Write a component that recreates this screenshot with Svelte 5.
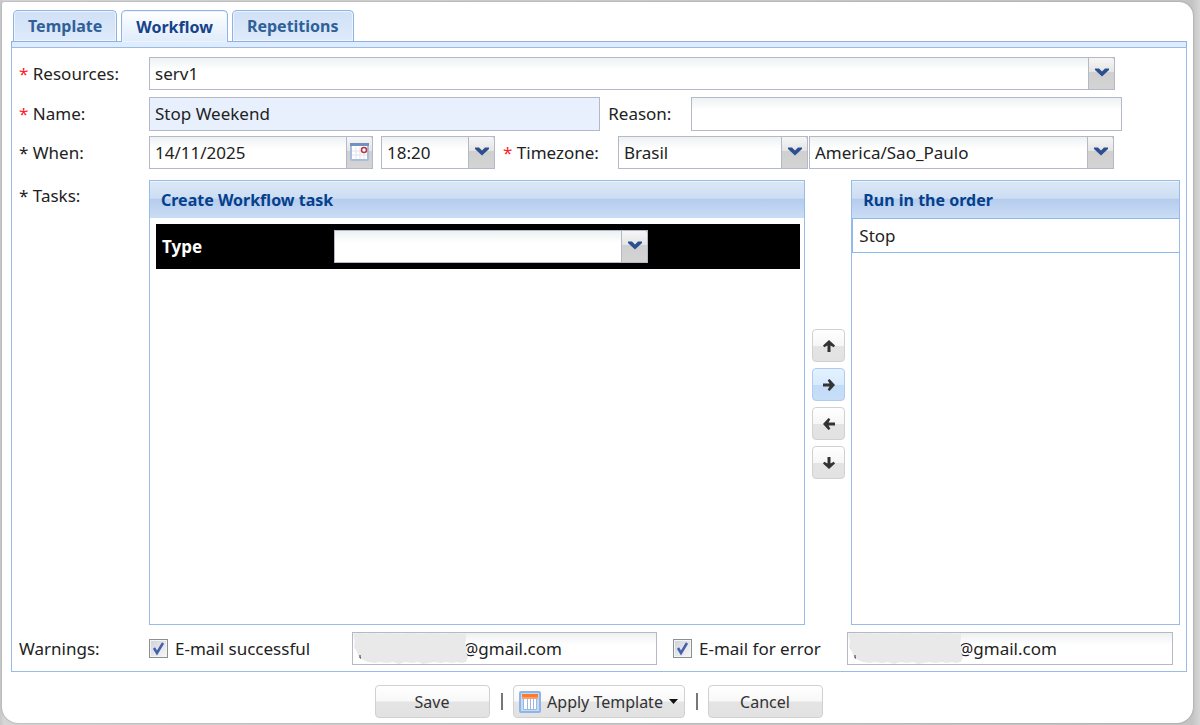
<script lang="ts">
  const tabs = ['Template', 'Workflow', 'Repetitions'];
  const arrows = [
    { name: 'Move up', angle: 0 },
    { name: 'Add task', angle: 90 },
    { name: 'Remove task', angle: 270 },
    { name: 'Move down', angle: 180 }
  ];

  let activeTab = $state('Workflow');
  let activeArrow = $state('Add task');
  let tasks = $state(['Stop']);
  let form = $state({
    resource: 'serv1',
    name: 'Stop Weekend',
    reason: '',
    date: '14/11/2025',
    time: '18:20',
    country: 'Brasil',
    timezone: 'America/Sao_Paulo',
    type: '',
    onSuccess: true,
    onError: true,
    successMail: '@gmail.com',
    errorMail: '@gmail.com'
  });
</script>

{#snippet trigger()}
  <span class="trigger">
    <svg width="14" height="9" viewBox="0 0 14 9" aria-hidden="true">
      <path d="M0 .5h4L7 3.500 10 .5h4V2L7 8.500 0 2z" fill="#2c4f90" />
    </svg>
  </span>
{/snippet}

{#snippet smudge()}
  <svg class="smudge" width="118" height="33" viewBox="0 0 118 33" aria-hidden="true">
    <path
      d="M2 2l5-1 7 1 6-1 9 1 8-1 12 1 9-1 12 1 9-1 12 1 9-1 11 1 3-1v6l-1 4 2 5-1 4 2 5-2 5-5 1-4-1-5 1-6-1-5 1-7-1-5 1-6 1-5-2-6 1-7-1-6 2-6-2-6 1-7-1-5 1-7-1-5-2-4-3-2-5-3-5 1-6-1-5z"
      fill="#e9e9e9"
    />
    <path d="M8 23v3h1" fill="none" stroke="#333" />
  </svg>
{/snippet}

<div class="page">
  <main class="window">
    <div class="tabs" role="tablist">
      {#each tabs as tab}
        <button
          class="tab"
          class:active={tab === activeTab}
          role="tab"
          aria-selected={tab === activeTab}
          onclick={() => (activeTab = tab)}>{tab}</button
        >
      {/each}
    </div>
    <div class="strip"></div>

    <form class="sheet">
      <div class="row resources">
        <label class="caption" for="resource"><i>*</i> Resources:</label>
        <div class="combo">
          <select id="resource" bind:value={form.resource}>
            <option>serv1</option>
          </select>
          {@render trigger()}
        </div>
      </div>

      <div class="row names">
        <label class="caption" for="name"><i>*</i> Name:</label>
        <input id="name" class="field name filled" type="text" bind:value={form.name} />
        <label class="reason-label" for="reason">Reason:</label>
        <input id="reason" class="field reason" type="text" bind:value={form.reason} />
      </div>

      <div class="row when">
        <label class="caption" for="date">* When:</label>
        <div class="combo date">
          <input id="date" class="field" type="text" bind:value={form.date} />
          <button class="trigger picker" type="button" aria-label="Choose date">
            <svg width="19" height="19" viewBox="0 0 19 19" aria-hidden="true">
              <rect x="1" y="2" width="17" height="16" rx="1" fill="#fff" stroke="#a9bcdb" stroke-width="2" />
              <path d="M0 1h19v3H0z" fill="#7191c2" />
              <path d="M6 5v12M10 5v12M14 5v12M2 9h15M2 13h15" stroke="#dfe3ea" />
              <circle cx="14" cy="8" r="2.500" fill="#fff" stroke="#b9343c" stroke-width="1.500" />
            </svg>
          </button>
        </div>
        <div class="combo time">
          <select aria-label="Time" bind:value={form.time}>
            <option>18:20</option>
          </select>
          {@render trigger()}
        </div>
        <label class="zone-label" for="country"><i>*</i> Timezone:</label>
        <div class="combo country">
          <select id="country" bind:value={form.country}>
            <option>Brasil</option>
          </select>
          {@render trigger()}
        </div>
        <div class="combo zone">
          <select aria-label="City" bind:value={form.timezone}>
            <option>America/Sao_Paulo</option>
          </select>
          {@render trigger()}
        </div>
      </div>

      <div class="row tasks">
        <span class="caption">* Tasks:</span>
        <section class="panel create">
          <h2>Create Workflow task</h2>
          <div class="type-bar">
            <label for="type">Type</label>
            <div class="combo">
              <select id="type" bind:value={form.type}>
                <option value=""></option>
              </select>
              {@render trigger()}
            </div>
          </div>
        </section>
        <div class="arrows">
          {#each arrows as arrow}
            <button
              class="arrow"
              class:over={arrow.name === activeArrow}
              type="button"
              aria-label={arrow.name}
              onclick={() => (activeArrow = arrow.name)}
            >
              <svg width="14" height="14" viewBox="0 0 14 14" aria-hidden="true">
                <g transform="rotate({arrow.angle} 7 7)">
                  <path d="M7 1l6 5.500-1.200 1.800L8.500 6.500V13h-3V6.500L2.200 8.300 1 6.500z" fill="#333" />
                </g>
              </svg>
            </button>
          {/each}
        </div>
        <section class="panel order">
          <h2>Run in the order</h2>
          <ul>
            {#each tasks as task}
              <li>{task}</li>
            {/each}
          </ul>
        </section>
      </div>

      <div class="row warnings">
        <span class="caption">Warnings:</span>
        <label class="check success-label">
          <input type="checkbox" bind:checked={form.onSuccess} />
          E-mail successful
        </label>
        <div class="mail success">
          <input class="field" type="text" aria-label="Success e-mail" bind:value={form.successMail} />
          {@render smudge()}
        </div>
        <label class="check error-label">
          <input type="checkbox" bind:checked={form.onError} />
          E-mail for error
        </label>
        <div class="mail error">
          <input class="field" type="text" aria-label="Error e-mail" bind:value={form.errorMail} />
          {@render smudge()}
        </div>
      </div>
    </form>

    <footer>
      <button class="btn" type="button">Save</button>
      <span class="divider"></span>
      <button class="btn menu" type="button">
        <svg width="22" height="22" viewBox="0 0 22 22" aria-hidden="true">
          <rect x="1" y="1" width="20" height="20" rx="1" fill="#c5daf5" stroke="#8fb4e6" stroke-width="2" />
          <path d="M4 7h14v11H4z" fill="#fff" />
          <path d="M3 3h16v5H3z" fill="#f9a066" />
          <path d="M3 3h16v3H3z" fill="#fb7b35" />
          <path d="M4.500 8v10.500h13V8M8.500 8v10M11.500 8v10M14.500 8v10" fill="none" stroke="#9ab9e2" />
        </svg>
        <span>Apply Template</span>
        <svg width="9" height="5" viewBox="0 0 9 5" aria-hidden="true">
          <path d="M0 0h9L4.500 5z" fill="#111" />
        </svg>
      </button>
      <span class="divider"></span>
      <button class="btn" type="button">Cancel</button>
    </footer>
  </main>
</div>

<style>
  :global(body) {
    margin: 0;
    background: #d2d2d2;
  }

  .page,
  .page * {
    box-sizing: border-box;
  }

  .page {
    display: flex;
    min-height: 100vh;
    padding: 2px 7px 2px 2px;
    background: linear-gradient(90deg, #c8c8c8, #d6d6d6 4px, #c4c4c4 calc(100% - 8px), #d6d6d6);
    color: #222;
    font-family: 'Noto Sans', 'Open Sans', sans-serif;
    font-size: 17px;
    line-height: 24px;
  }

  button,
  input,
  select {
    margin: 0;
    color: inherit;
    font: inherit;
  }

  .window {
    flex: 1;
    display: flex;
    flex-direction: column;
    min-width: 0;
    padding: 8px 6px 5px 9px;
    border-radius: 2px 14px 16px 16px;
    background: #fff;
    box-shadow: 0 0 2px #888;
  }

  /* Tabs */
  .tabs {
    display: flex;
    gap: 4px;
    padding-left: 2px;
  }

  .tab {
    height: 31px;
    padding: 0 14px;
    border: 1px solid #8db2e3;
    border-bottom: none;
    border-radius: 5px 5px 0 0;
    background: linear-gradient(#d0e0f6, #deebfb);
    box-shadow: inset 0 0 0 1px #edf4fd;
    color: #2f6098;
    font-size: 16px;
    font-weight: bold;
  }

  .tab.active {
    position: relative;
    height: 32px;
    margin-bottom: -1px;
    background: linear-gradient(#fff, #deebfb);
    color: #15428b;
  }

  .strip {
    height: 6px;
    border: 1px solid #8db2e3;
    border-bottom: none;
    background: #deecfd;
  }

  /* Form */
  .sheet {
    flex: 1;
    display: flex;
    flex-direction: column;
    padding: 9px 6px 6px 7px;
    border: 1px solid #99bbe8;
  }

  .row {
    display: flex;
    align-items: center;
  }

  .caption {
    flex: 0 0 130px;
  }

  i {
    color: #f22;
    font-style: normal;
  }

  .resources {
    padding-right: 65px;
  }

  .names {
    margin-top: 7px;
    padding-right: 58px;
  }

  .when {
    margin-top: 5px;
    padding-right: 66px;
  }

  .field,
  select {
    display: block;
    width: 100%;
    min-width: 0;
    height: 33px;
    padding: 0 5px;
    border: 1px solid #b5b8c8;
    border-radius: 0;
    outline: none;
    background: #fff linear-gradient(#edf1f2, #fff 12px);
    appearance: none;
  }

  .name {
    flex: 451 1 0;
  }

  .reason {
    flex: 430 1 0;
  }

  .names .field {
    height: 34px;
    padding-bottom: 2px;
  }

  .names .filled {
    background: #e8f0fe;
  }

  .reason-label {
    flex: 0 0 91px;
    padding-left: 8px;
  }

  .combo {
    position: relative;
    flex: 1;
    min-width: 0;
  }

  .trigger {
    position: absolute;
    top: 1px;
    right: 0;
    bottom: 1px;
    display: flex;
    align-items: center;
    justify-content: center;
    width: 27px;
    padding: 0 0 2px;
    border: solid #b5b8c8;
    border-width: 0 1px;
    border-radius: 0 3px 0 0;
    background: linear-gradient(#f6f6f6, #e4e4e4 45%, #cfcfcf 46%, #d4d4d4);
    pointer-events: none;
  }

  .picker {
    pointer-events: auto;
  }

  .when .date {
    flex: 224 1 0;
  }

  .when .time {
    flex: 114 1 0;
    margin-left: 8px;
  }

  .when .country {
    flex: 190 1 0;
  }

  .when .zone {
    flex: 305 1 0;
    margin-left: 1px;
  }

  .zone-label {
    flex: 0 0 123px;
    padding-left: 8px;
  }

  /* Task lists */
  .tasks {
    flex: 1;
    align-items: stretch;
    min-height: 300px;
    margin-top: 11px;
  }

  .tasks .caption {
    padding-top: 4px;
  }

  .panel {
    min-width: 0;
    border: 1px solid #99bbe8;
  }

  .create {
    flex: 657 1 0;
  }

  .order {
    flex: 328 1 0;
  }

  h2 {
    height: 37px;
    margin: 0;
    padding-left: 11px;
    border-top: 1px solid #eef4fb;
    background: linear-gradient(#dae7f6, #cddef3 45%, #b5ccee 48%, #cbddf5);
    color: #04408c;
    font-size: 16px;
    font-weight: bold;
    line-height: 36px;
  }

  .type-bar {
    display: flex;
    align-items: center;
    height: 45px;
    margin: 6px 4px 0 6px;
    padding: 0 152px 0 6px;
    background: #000;
    color: #fff;
    font-weight: bold;
  }

  .type-bar label {
    flex: 0 0 172px;
  }

  .type-bar select {
    color: #222;
    font-weight: normal;
  }

  .arrows {
    display: flex;
    flex-direction: column;
    gap: 6px;
    padding: 149px 6px 0 7px;
  }

  .arrow {
    display: grid;
    place-items: center;
    width: 33px;
    height: 33px;
    padding: 0;
    border: 1px solid #d1d1d1;
    border-radius: 4px;
    background: linear-gradient(#fff, #f6f6f6 50%, #e4e4e4 52%, #e2e2e2);
  }

  .arrow.over {
    border-color: #aecbf3;
    background: linear-gradient(#e4f2ff, #d8eaff 50%, #c2dbf7 52%, #c8def8);
  }

  ul {
    margin: 0;
    padding: 0;
    list-style: none;
  }

  li {
    height: 35px;
    padding-left: 6px;
    border: 1px solid #8db9ef;
    border-width: 1px 0 1px 1px;
    line-height: 33px;
  }

  /* Warnings */
  .warnings {
    margin-top: 7px;
    padding-right: 7px;
  }

  .check {
    display: flex;
    align-items: center;
    gap: 7px;
    white-space: nowrap;
  }

  .check input {
    flex: none;
    width: 19px;
    height: 19px;
    border: 1px solid #8e8f8f;
    outline: 1px solid #f4f4f4;
    outline-offset: -2px;
    background: linear-gradient(135deg, #cdd2da, #f7f7f8);
    appearance: none;
  }

  .check input:checked {
    background: url("data:image/svg+xml,%3Csvg xmlns='http://www.w3.org/2000/svg' viewBox='0 0 17 17'%3E%3Cpath d='M4 8l3 5 6-10' fill='none' stroke='%234660ac' stroke-width='2.500'/%3E%3C/svg%3E"),
      linear-gradient(135deg, #cdd2da, #f7f7f8);
  }

  .success-label {
    flex: 0 0 203px;
  }

  .error-label {
    flex: 0 0 190px;
    padding-left: 16px;
  }

  .mail {
    position: relative;
    min-width: 0;
  }

  .success {
    flex: 305 1 0;
  }

  .error {
    flex: 326 1 0;
  }

  .mail .field {
    padding-left: 110px;
  }

  .smudge {
    position: absolute;
    top: 0;
    left: 0;
    pointer-events: none;
  }

  /* Footer */
  footer {
    display: flex;
    align-items: center;
    justify-content: center;
    padding-top: 13px;
    padding-right: 1px;
  }

  .btn {
    display: flex;
    align-items: center;
    justify-content: center;
    width: 115px;
    height: 33px;
    padding: 0;
    border: 1px solid #d1d1d1;
    border-radius: 4px;
    background: linear-gradient(#fff, #f8f8f8 48%, #e4e4e4 52%, #e2e2e2);
    color: #333;
    font-size: 16px;
  }

  .btn.menu {
    gap: 6px;
    width: 172px;
  }

  .divider {
    width: 2px;
    height: 17px;
    margin: 0 10px 0 11px;
    background: #777;
  }
</style>
